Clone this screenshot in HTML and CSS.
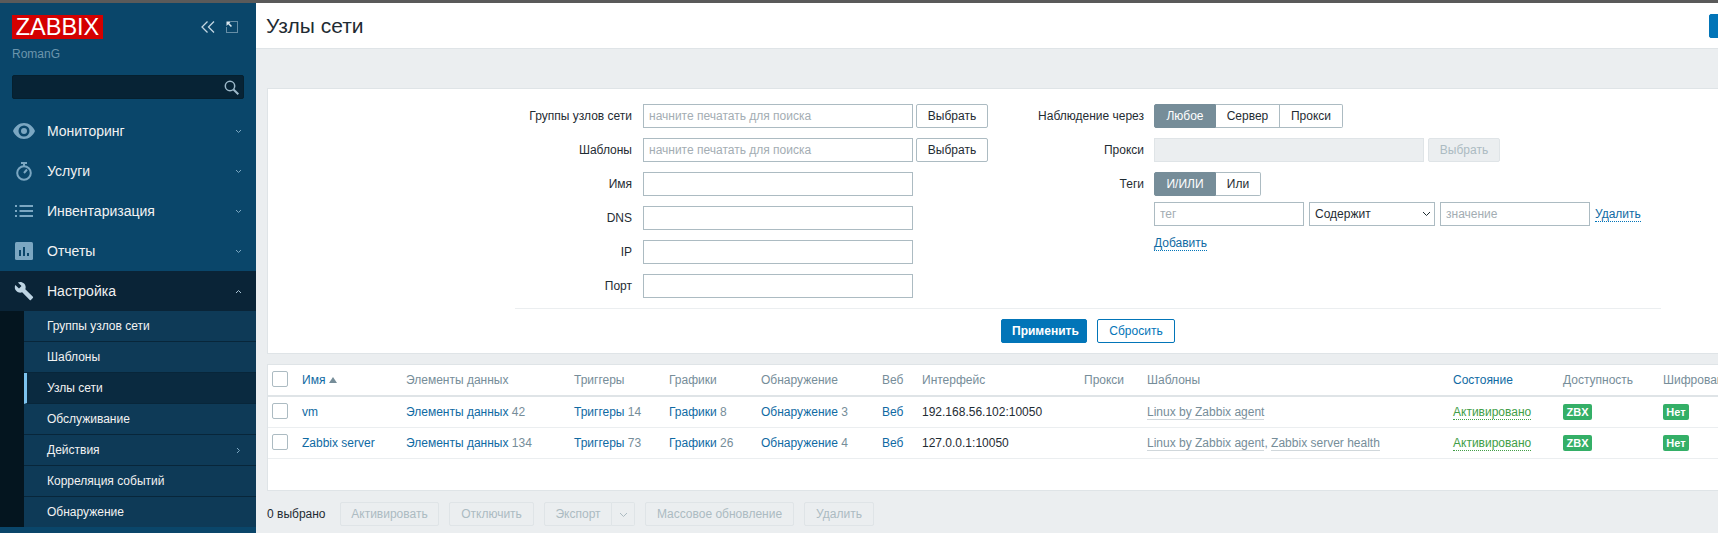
FILE: index.html
```html
<!DOCTYPE html>
<html lang="ru">
<head>
    <meta charset="UTF-8">
    <title>Узлы сети</title>
    <link rel="stylesheet" href="styles.css">
</head>
<body>

    <aside class="sidebar">
        <div class="brand">
            <span class="logo">ZABBIX</span>
            <div class="brand-tools">
                <svg width="14" height="12" viewBox="0 0 14 12" fill="none" stroke="#c3d6e2" stroke-width="1.3"><path d="M6.5 .5 1 6l5.500 5.500M13 .5 7.500 6l5.500 5.500"/></svg>
                <svg width="12" height="12" viewBox="0 0 12 12" fill="none"><path d="M5.500 .5h6.000v11H.5V5.500" stroke="#c3d6e2" stroke-dasharray="1 1"/><path d="M.5 .5h4.500L3.300 2.200 6 4.900 4.900 6 2.200 3.300.5 5z" fill="#dce8ef"/></svg>
            </div>
        </div>
        <div class="user">RomanG</div>
        <div class="search">
            <svg width="15" height="15" viewBox="0 0 15 15" fill="none" stroke="#9db9ca" stroke-width="1.500"><circle cx="6" cy="6" r="4.700"/><path d="m9.500 9.500 4.800 4.800" stroke-width="2"/></svg>
        </div>

        <nav class="menu">
            <a class="menu-item">
                <span class="menu-icon"><svg width="22" height="16" viewBox="0 0 22 16"><path fill="#7ba7c2" fill-rule="evenodd" d="M11 0c5 0 9 3.400 11 8-2 4.600-6 8-11 8S2 12.600 0 8c2-4.600 6-8 11-8zm0 2.500a5.500 5.500 0 1 0 0 11 5.500 5.500 0 0 0 0-11z"/><circle cx="11" cy="8" r="3" fill="#7ba7c2"/></svg></span>
                Мониторинг
                <svg class="chevron" width="7" height="5" viewBox="0 0 7 5" fill="none" stroke="#7ba7c2"><path d="m1 1 2.500 2.500L6 1"/></svg>
            </a>
            <a class="menu-item">
                <span class="menu-icon"><svg width="16" height="19" viewBox="0 0 16 19" fill="none" stroke="#7ba7c2" stroke-width="2"><circle cx="8" cy="11" r="6.800"/><path d="M5 1h6M8 1v3M8 11l3-3.500"/></svg></span>
                Услуги
                <svg class="chevron" width="7" height="5" viewBox="0 0 7 5" fill="none" stroke="#7ba7c2"><path d="m1 1 2.500 2.500L6 1"/></svg>
            </a>
            <a class="menu-item">
                <span class="menu-icon"><svg width="18" height="12" viewBox="0 0 18 12" fill="#7ba7c2"><path d="M0 0h2v2H0zM4.500 0H18v2H4.500zM0 5h2v2H0zM4.500 5H18v2H4.500zM0 10h2v2H0zM4.500 10H18v2H4.500z"/></svg></span>
                Инвентаризация
                <svg class="chevron" width="7" height="5" viewBox="0 0 7 5" fill="none" stroke="#7ba7c2"><path d="m1 1 2.500 2.500L6 1"/></svg>
            </a>
            <a class="menu-item">
                <span class="menu-icon"><svg width="18" height="18" viewBox="0 0 18 18"><rect width="18" height="18" rx="1.500" fill="#7ba7c2"/><path fill="#0a466a" d="M4 8h2v6H4zM8 5h2v9H8zM12 11h2v3h-2z"/></svg></span>
                Отчеты
                <svg class="chevron" width="7" height="5" viewBox="0 0 7 5" fill="none" stroke="#7ba7c2"><path d="m1 1 2.500 2.500L6 1"/></svg>
            </a>
            <a class="menu-item menu-open">
                <span class="menu-icon"><svg width="20" height="20" viewBox="0 0 24 24"><path fill="#bdd4e3" d="M22.700 19l-9.100-9.100c.9-2.300.4-5-1.500-6.900-2-2-5-2.400-7.400-1.300L9 6 6 9 1.600 4.700C.4 7.100.9 10.100 2.900 12.100c1.900 1.900 4.600 2.400 6.900 1.500l9.100 9.100c.4.400 1 .4 1.400 0l2.300-2.300c.5-.4.5-1.100.1-1.400z"/></svg></span>
                Настройка
                <svg class="chevron" width="7" height="5" viewBox="0 0 7 5" fill="none" stroke="#a9c5d6"><path d="m1 4 2.500-2.500L6 4"/></svg>
            </a>
            <ul class="submenu">
                <li>Группы узлов сети</li>
                <li>Шаблоны</li>
                <li class="current">Узлы сети</li>
                <li>Обслуживание</li>
                <li>Действия<svg class="chevron" width="5" height="7" viewBox="0 0 5 7" fill="none" stroke="#7ba7c2"><path d="m1 1 2.500 2.500L1 6"/></svg></li>
                <li>Корреляция событий</li>
                <li>Обнаружение</li>
            </ul>
        </nav>
    </aside>

    <main class="main">
        <header class="page-head">
            <h1>Узлы сети</h1>
            <button class="btn btn-primary btn-create" aria-label="Создать узел сети"></button>
        </header>

        <div class="content">
            <section class="filter">
                <div class="filter-cols">
                    <div class="filter-left">
                        <label>Группы узлов сети</label>
                        <input type="text" placeholder="начните печатать для поиска">
                        <button class="btn">Выбрать</button>

                        <label>Шаблоны</label>
                        <input type="text" placeholder="начните печатать для поиска">
                        <button class="btn">Выбрать</button>

                        <label>Имя</label>
                        <input class="span-2" type="text">
                        <label>DNS</label>
                        <input class="span-2" type="text">
                        <label>IP</label>
                        <input class="span-2" type="text">
                        <label>Порт</label>
                        <input class="span-2" type="text">
                    </div>

                    <div class="filter-right">
                        <label>Наблюдение через</label>
                        <div class="seg">
                            <span class="seg-item on seg-first">Любое</span>
                            <span class="seg-item seg-server">Сервер</span>
                            <span class="seg-item seg-proxy">Прокси</span>
                        </div>

                        <label>Прокси</label>
                        <div class="proxy-row">
                            <input class="proxy-input" type="text" disabled>
                            <button class="btn btn-off btn-pick">Выбрать</button>
                        </div>

                        <label>Теги</label>
                        <div>
                            <div class="seg">
                                <span class="seg-item on seg-first">И/ИЛИ</span>
                                <span class="seg-item seg-or">Или</span>
                            </div>
                            <div class="tag-row">
                                <input class="tag-input" type="text" placeholder="тег">
                                <div class="select-wrap">
                                    <select><option>Содержит</option></select>
                                    <svg width="9" height="6" viewBox="0 0 9 6" fill="none" stroke="#1f2c33"><path d="m1 1 3.500 3.500L8 1"/></svg>
                                </div>
                                <input class="tag-input" type="text" placeholder="значение">
                                <a class="link-dotted tag-del">Удалить</a>
                            </div>
                            <a class="link-dotted tag-add">Добавить</a>
                        </div>
                    </div>
                </div>

                <div class="filter-actions">
                    <button class="btn btn-primary btn-apply">Применить</button>
                    <button class="btn btn-outline">Сбросить</button>
                </div>
            </section>

            <section class="table-box">
                <table class="hosts">
                    <colgroup>
                        <col class="c-check"><col class="c-name"><col class="c-items"><col class="c-trig">
                        <col class="c-graph"><col class="c-disc"><col class="c-web"><col class="c-iface">
                        <col class="c-proxy"><col class="c-tpl"><col class="c-state"><col class="c-avail"><col class="c-enc">
                    </colgroup>
                    <thead>
                        <tr>
                            <th><span class="check"></span></th>
                            <th><a>Имя</a> <span class="sort-arrow"></span></th>
                            <th>Элементы данных</th>
                            <th>Триггеры</th>
                            <th>Графики</th>
                            <th>Обнаружение</th>
                            <th>Веб</th>
                            <th>Интерфейс</th>
                            <th>Прокси</th>
                            <th>Шаблоны</th>
                            <th><a>Состояние</a></th>
                            <th>Доступность</th>
                            <th>Шифрование</th>
                        </tr>
                    </thead>
                    <tbody>
                        <tr>
                            <td><span class="check"></span></td>
                            <td><a>vm</a></td>
                            <td><a>Элементы данных</a> <span class="num">42</span></td>
                            <td><a>Триггеры</a> <span class="num">14</span></td>
                            <td><a>Графики</a> <span class="num">8</span></td>
                            <td><a>Обнаружение</a> <span class="num">3</span></td>
                            <td><a>Веб</a></td>
                            <td>192.168.56.102:10050</td>
                            <td></td>
                            <td><a class="tpl">Linux by Zabbix agent</a></td>
                            <td><a class="state">Активировано</a></td>
                            <td><span class="tag tag-zbx">ZBX</span></td>
                            <td><span class="tag">Нет</span></td>
                        </tr>
                        <tr>
                            <td><span class="check"></span></td>
                            <td><a>Zabbix server</a></td>
                            <td><a>Элементы данных</a> <span class="num">134</span></td>
                            <td><a>Триггеры</a> <span class="num">73</span></td>
                            <td><a>Графики</a> <span class="num">26</span></td>
                            <td><a>Обнаружение</a> <span class="num">4</span></td>
                            <td><a>Веб</a></td>
                            <td>127.0.0.1:10050</td>
                            <td></td>
                            <td><a class="tpl">Linux by Zabbix agent</a><span class="tpl-sep">,</span> <a class="tpl">Zabbix server health</a></td>
                            <td><a class="state">Активировано</a></td>
                            <td><span class="tag tag-zbx">ZBX</span></td>
                            <td><span class="tag">Нет</span></td>
                        </tr>
                    </tbody>
                </table>
            </section>

            <div class="actions">
                <span class="selected">0 выбрано</span>
                <button class="btn btn-off act-on">Активировать</button>
                <button class="btn btn-off act-off">Отключить</button>
                <div class="split">
                    <button class="btn btn-off split-main">Экспорт</button>
                    <button class="btn btn-off split-arrow"><svg width="9" height="6" viewBox="0 0 9 6" fill="none" stroke="#acbbc2"><path d="m1 1 3.500 3.500L8 1"/></svg></button>
                </div>
                <button class="btn btn-off act-mass">Массовое обновление</button>
                <button class="btn btn-off act-del">Удалить</button>
            </div>
        </div>
    </main>

</body>
</html>
```

FILE: styles.css
```css
* {
    box-sizing: border-box;
}
html, body {
    height: 100%;
}
body {
    margin: 0;
    display: flex;
    overflow: hidden;
    border-top: 3px solid #5a5a5a;
    background-color: #ebeef0;
    font-family: "Liberation Sans", Arial, sans-serif;
    font-size: 12px;
    color: #1f2c33;
}

/* sidebar */
.sidebar {
    width: 256px;
    flex: none;
    background-color: #0a466a;
    color: #f2f2f2;
}
.brand {
    display: flex;
    justify-content: space-between;
    align-items: center;
    padding: 12px 18px 0 12px;
}
.logo {
    width: 91px;
    height: 24px;
    background-color: #d40000;
    color: #fff;
    font-size: 23.5px;
    line-height: 24px;
    text-align: center;
}
.brand-tools {
    display: flex;
    align-items: center;
    gap: 11px;
}
.user {
    padding: 8px 12px 0;
    color: #6c95ad;
    font-size: 12px;
    line-height: 14px;
}
.search {
    display: flex;
    justify-content: flex-end;
    align-items: center;
    height: 24px;
    margin: 14px 12px 12px;
    padding-right: 4px;
    background-color: #072335;
    border: 1px solid #05202f;
    border-radius: 2px;
}
.menu-item {
    display: flex;
    align-items: center;
    height: 40px;
    padding: 0 14px 0 0;
    color: #f2f2f2;
    font-size: 14px;
}
.menu-icon {
    display: flex;
    justify-content: center;
    width: 47px;
}
.chevron {
    margin-left: auto;
}
.menu-open {
    background-color: #0a2437;
}
.submenu {
    margin: 0;
    padding: 0;
    list-style: none;
    border-left: 24px solid #04151f;
}
.submenu li {
    display: flex;
    align-items: center;
    height: 31px;
    padding: 0 15px 0 23px;
    background-color: #0e3a57;
    border-bottom: 1px solid #08263a;
}
.submenu li:last-child {
    height: 30px;
    border-bottom: none;
}
.submenu .current {
    padding-left: 20px;
    background-color: #0a2a40;
    border-left: 3px solid #7cc3ef;
}

/* main area */
.main {
    flex: 1;
    min-width: 0;
    overflow: hidden;
}
.page-head {
    display: flex;
    justify-content: space-between;
    align-items: center;
    width: 100%;
    height: 46px;
    padding-left: 10px;
    overflow: hidden;
    background-color: #fff;
    border-bottom: 1px solid #dfe4e7;
}
h1 {
    margin: 0;
    font-size: 21px;
    font-weight: normal;
}
.btn-create {
    width: 120px;
    flex: none;
    margin-right: -111px;
}
.content {
    width: 1503px;
    padding: 39px 0 0 11px;
}

/* buttons and inputs */
.btn {
    height: 24px;
    padding: 0 10px;
    background-color: #fff;
    border: 1px solid #acbbc2;
    border-radius: 2px;
    font-family: inherit;
    font-size: 12px;
    color: #1f2c33;
}
.btn-primary {
    background-color: #0275b8;
    border-color: #0275b8;
    color: #fff;
    font-weight: bold;
}
.btn-outline {
    width: 78px;
    border-color: #0275b8;
    color: #0275b8;
}
.btn-apply {
    width: 86px;
}
.btn-off {
    background-color: #ebeef0;
    border-color: #dfe4e7;
    color: #acbbc2;
}
input, select {
    height: 24px;
    padding: 0 5px;
    background-color: #fff;
    border: 1px solid #acbbc2;
    font-family: inherit;
    font-size: 12px;
    color: #1f2c33;
}
input::placeholder {
    color: #a3adb3;
    opacity: 1;
}
input:disabled {
    background-color: #ebeef0;
    border-color: #dfe4e7;
}
a {
    color: #0f6aa3;
}

/* filter */
.filter {
    background-color: #fff;
    border: 1px solid #dfe4e7;
    border-right: none;
    padding-top: 15px;
}
.filter-cols {
    display: flex;
}
.filter-left {
    display: grid;
    grid-template-columns: 372px 270px 72px;
    column-gap: 3px;
    row-gap: 10px;
    align-items: center;
    align-content: start;
    width: 720px;
}
.filter-left label {
    margin-right: 8px;
    text-align: right;
}
.filter-left input {
    width: 270px;
}
.span-2 {
    grid-column: span 2;
}
.filter-right {
    display: grid;
    grid-template-columns: 156px 1fr;
    column-gap: 10px;
    row-gap: 10px;
    align-items: start;
    align-content: start;
}
.filter-right label {
    line-height: 24px;
    text-align: right;
}
.seg {
    display: flex;
}
.seg-item {
    height: 24px;
    line-height: 22px;
    text-align: center;
    background-color: #fff;
    border: 1px solid #acbbc2;
    border-left: none;
}
.seg-item:last-child {
    border-radius: 0 2px 2px 0;
}
.seg-first {
    width: 62px;
    border: 1px solid #768d99;
    border-radius: 2px 0 0 2px;
    background-color: #768d99;
    color: #fff;
}
.seg-server {
    width: 64px;
}
.seg-proxy {
    width: 63px;
}
.seg-or {
    width: 45px;
}
.proxy-row {
    display: flex;
    gap: 4px;
}
.proxy-input {
    width: 270px;
}
.btn-pick {
    width: 72px;
}
.tag-row {
    display: flex;
    align-items: center;
    gap: 5px;
    margin-top: 6px;
}
.tag-input {
    width: 150px;
}
.select-wrap {
    position: relative;
    width: 126px;
}
.select-wrap select {
    width: 100%;
    appearance: none;
    background-color: #fff;
}
.select-wrap svg {
    position: absolute;
    top: 9px;
    right: 4px;
}
.link-dotted {
    border-bottom: 1px dotted #0275b8;
    line-height: 14px;
}
.tag-add {
    display: inline-block;
    margin-top: 10px;
}
.filter-actions {
    display: flex;
    justify-content: center;
    gap: 10px;
    width: 1146px;
    margin: 10px 0 0 247px;
    padding: 10px 0;
    border-top: 1px solid #ebeef0;
}

/* hosts table */
.table-box {
    margin-top: 10px;
    padding-bottom: 31px;
    background-color: #fff;
    border: 1px solid #dfe4e7;
    border-right: none;
}
.hosts {
    width: 1490px;
    table-layout: fixed;
    border-collapse: separate;
    border-spacing: 0;
}
.c-check { width: 29px; }
.c-name { width: 104px; }
.c-items { width: 168px; }
.c-trig { width: 95px; }
.c-graph { width: 92px; }
.c-disc { width: 121px; }
.c-web { width: 40px; }
.c-iface { width: 162px; }
.c-proxy { width: 63px; }
.c-tpl { width: 306px; }
.c-state { width: 110px; }
.c-avail { width: 100px; }
.c-enc { width: 100px; }
.hosts th {
    height: 32px;
    padding: 0 5px;
    font-weight: normal;
    text-align: left;
    color: #768d99;
    white-space: nowrap;
    border-bottom: 2px solid #dfe4e7;
}
.hosts td {
    height: 31px;
    padding: 0 5px;
    white-space: nowrap;
    border-bottom: 1px solid #ebeef0;
}
.hosts th:first-child,
.hosts td:first-child {
    padding-left: 4px;
}
.check {
    display: block;
    width: 16px;
    height: 16px;
    margin-bottom: 2px;
    background-color: #fff;
    border: 1px solid #acbbc2;
    border-radius: 2px;
}
.sort-arrow {
    display: inline-block;
    width: 0;
    height: 0;
    border: 4px solid transparent;
    border-top: none;
    border-bottom: 6px solid #768d99;
    vertical-align: 1px;
}
.num,
.tpl-sep {
    color: #768d99;
}
.tpl {
    color: #768d99;
    border-bottom: 1px solid #d0d7db;
}
.state {
    color: #429e47;
    border-bottom: 1px dotted #429e47;
}
.tag {
    display: inline-block;
    width: 26px;
    height: 16px;
    background-color: #34af67;
    border-radius: 2px;
    color: #fff;
    font-size: 11px;
    font-weight: bold;
    line-height: 16px;
    text-align: center;
}
.tag-zbx {
    width: 29px;
}

/* mass actions under the table */
.actions {
    display: flex;
    align-items: center;
    gap: 10px;
    margin-top: 11px;
}
.actions .btn {
    padding: 0;
}
.selected {
    width: 63px;
    color: #1f2c33;
}
.actions .act-on { width: 99px; }
.actions .act-off { width: 85px; }
.actions .split-main { width: 68px; }
.actions .act-mass { width: 149px; }
.actions .act-del { width: 70px; }
.split {
    display: flex;
}
.split-main {
    border-radius: 2px 0 0 2px;
}
.actions .split-arrow {
    width: 23px;
    border-left: none;
    border-radius: 0 2px 2px 0;
}
```
